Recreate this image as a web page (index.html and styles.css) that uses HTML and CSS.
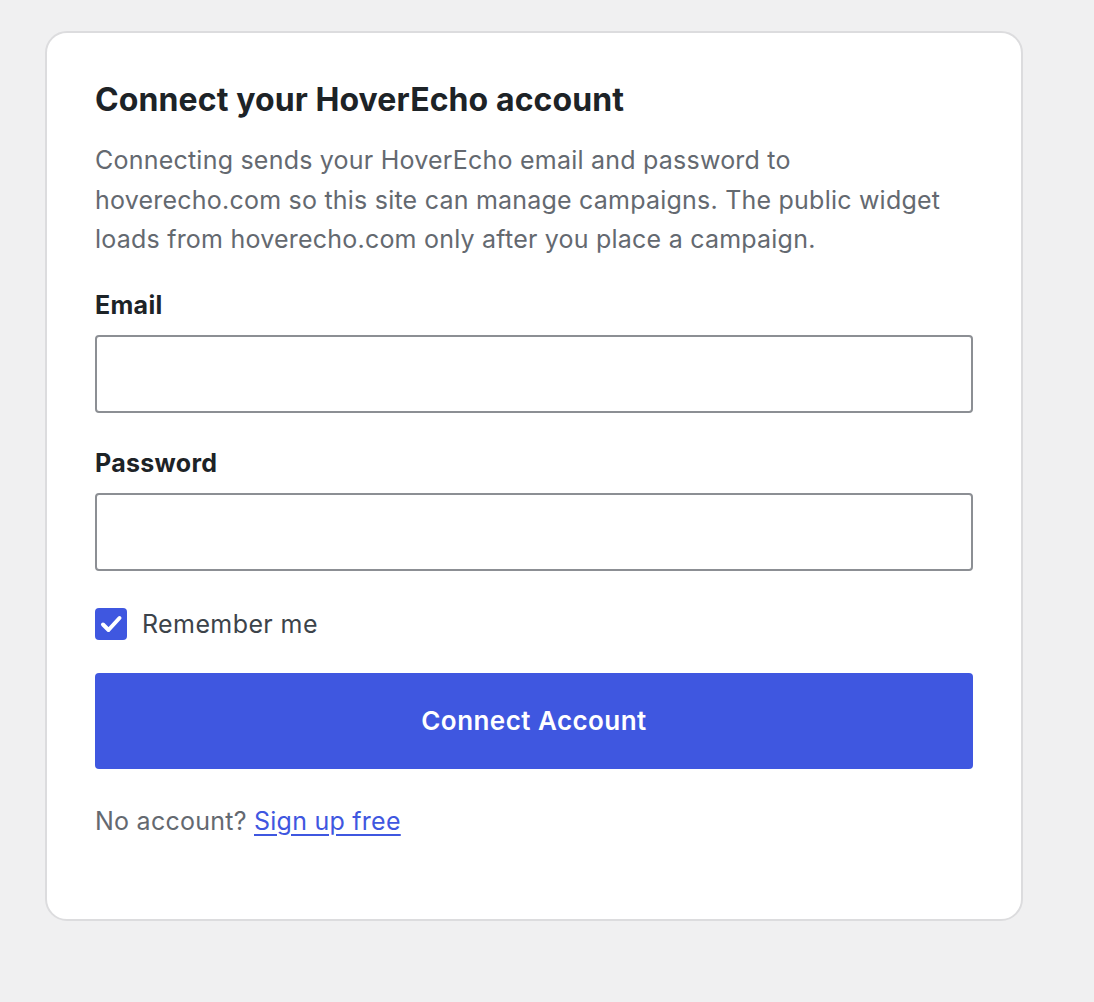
FILE: index.html
```html
<!DOCTYPE html>
<html lang="en">
<head>
<meta charset="utf-8">
<title>Connect your HoverEcho account</title>
<link rel="stylesheet" href="styles.css">
</head>
<body>
<main class="card">
  <h1 class="title">Connect your HoverEcho account</h1>
  <p class="desc">Connecting sends your HoverEcho email and password to hoverecho.com so this site can manage campaigns. The public widget loads from hoverecho.com only after you place a campaign.</p>
  <form class="form">
    <label class="field">
      <span class="label">Email</span>
      <input class="input" type="email">
    </label>
    <label class="field">
      <span class="label">Password</span>
      <input class="input" type="password">
    </label>
    <label class="remember">
      <span class="check">
        <svg viewBox="0 0 32 32" width="32" height="32"><path d="M8 16.5l5.5 5.5L24.5 10" fill="none" stroke="#fff" stroke-width="4" stroke-linecap="round" stroke-linejoin="round"/></svg>
      </span>
      <span class="remember-text">Remember me</span>
    </label>
    <button class="btn" type="button">Connect Account</button>
  </form>
  <p class="footer">No account? <a class="link" href="#">Sign up free</a></p>
</main>
</body>
</html>
```

FILE: styles.css
```css
html, body {
  margin: 0;
  padding: 0;
  background: #f0f0f1;
}
body {
  font-family: Inter, "Noto Sans", "Liberation Sans", sans-serif;
  padding: 31px 0 0 45px;
}
.card {
  box-sizing: border-box;
  width: 978px;
  height: 890px;
  background: #fff;
  border: 2px solid #dcdcde;
  border-radius: 22px;
  padding: 48px 48px 0 48px;
}
.title {
  margin: 0;
  font-size: 32px;
  line-height: 38px;
  font-weight: 700;
  color: #1d2327;
  letter-spacing: 0.1px;
}
.desc {
  margin: 22px 0 0;
  font-size: 25px;
  line-height: 39.5px;
  letter-spacing: 0.22px;
  color: #646970;
}
.form {
  margin-top: 30px;
  display: flex;
  flex-direction: column;
}
.field {
  display: flex;
  flex-direction: column;
  margin-bottom: 35px;
}
.label {
  font-size: 25px;
  line-height: 30px;
  font-weight: 700;
  letter-spacing: 0.3px;
  color: #1d2327;
  margin-bottom: 15px;
}
.input {
  box-sizing: border-box;
  height: 78px;
  width: 100%;
  border: 2px solid #8c8f94;
  border-radius: 4px;
  background: #fff;
  margin: 0;
}
.remember {
  display: flex;
  align-items: center;
  gap: 15px;
  margin-top: 2px;
}
.check {
  width: 32px;
  height: 32px;
  border-radius: 4px;
  background: #3f57e0;
  display: flex;
}
.remember-text {
  font-size: 25px;
  letter-spacing: 0.4px;
  color: #3c434a;
}
.btn {
  margin-top: 33px;
  height: 96px;
  width: 100%;
  border: 0;
  border-radius: 4px;
  background: #3f57e0;
  color: #fff;
  font-family: inherit;
  font-size: 26px;
  font-weight: 600;
  letter-spacing: 0.45px;
}
.footer {
  margin: 37px 0 0;
  font-size: 25px;
  letter-spacing: 0.25px;
  color: #646970;
}
.link {
  color: #3f57e0;
  text-decoration: underline;
  text-underline-offset: 4px;
  text-decoration-thickness: 2px;
}
```
